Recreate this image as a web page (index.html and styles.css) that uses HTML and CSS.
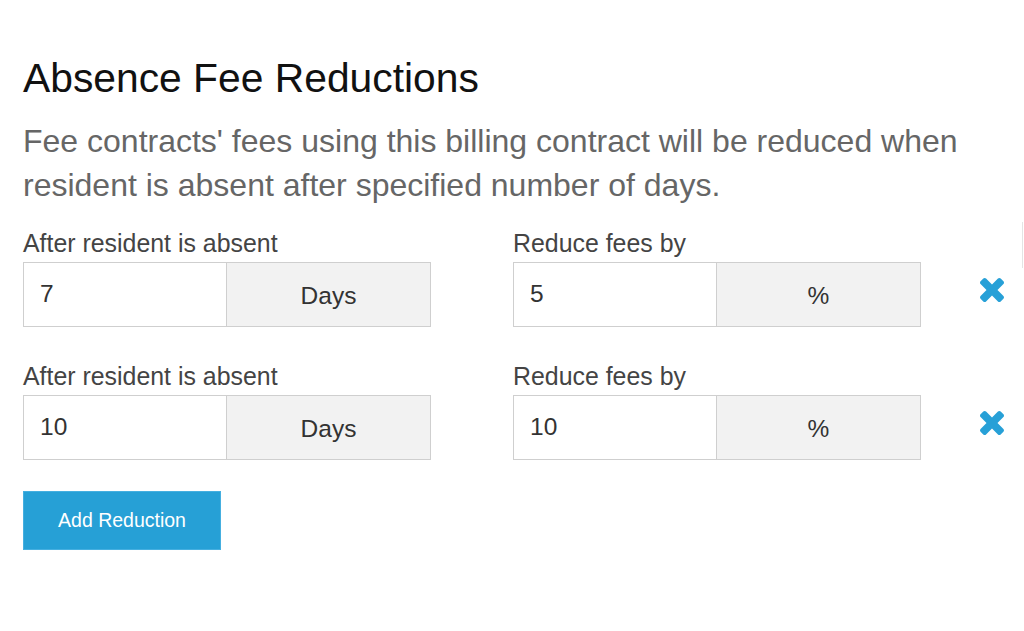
FILE: index.html
```html
<!doctype html>
<html lang="en">
<head>
    <meta charset="UTF-8">
    <meta name="viewport" content="width=device-width, initial-scale=1.0">
    <title>Absence Fee Reductions</title>
    <link rel="stylesheet" href="styles.css">
</head>
<body>
    <div class="edge-line"></div>

    <section class="reductions">
        <h2 class="title">Absence Fee Reductions</h2>
        <p class="intro">Fee contracts' fees using this billing contract will be reduced when resident is absent after specified number of days.</p>

        <!-- Reduction rows -->
        <div class="reduction-row">
            <div class="fields">
                <div class="field">
                    <label>After resident is absent</label>
                    <div class="input-group">
                        <input type="text" value="7">
                        <span class="addon">Days</span>
                    </div>
                </div>
                <div class="field">
                    <label>Reduce fees by</label>
                    <div class="input-group">
                        <input type="text" value="5">
                        <span class="addon">%</span>
                    </div>
                </div>
            </div>
            <button class="remove-btn" title="Remove">
                <svg viewBox="110 366 1188 1188"><path d="M1298 1322q0 40-28 68l-136 136q-28 28-68 28t-68-28l-294-294-294 294q-28 28-68 28t-68-28l-136-136q-28-28-28-68t28-68l294-294-294-294q-28-28-28-68t28-68l136-136q28-28 68-28t68 28l294 294 294-294q28-28 68-28t68 28l136 136q28 28 28 68t-28 68l-294 294 294 294q28 28 28 68z"/></svg>
            </button>
        </div>

        <div class="reduction-row">
            <div class="fields">
                <div class="field">
                    <label>After resident is absent</label>
                    <div class="input-group">
                        <input type="text" value="10">
                        <span class="addon">Days</span>
                    </div>
                </div>
                <div class="field">
                    <label>Reduce fees by</label>
                    <div class="input-group">
                        <input type="text" value="10">
                        <span class="addon">%</span>
                    </div>
                </div>
            </div>
            <button class="remove-btn" title="Remove">
                <svg viewBox="110 366 1188 1188"><path d="M1298 1322q0 40-28 68l-136 136q-28 28-68 28t-68-28l-294-294-294 294q-28 28-68 28t-68-28l-136-136q-28-28-28-68t28-68l294-294-294-294q-28-28-28-68t28-68l136-136q28-28 68-28t68 28l294 294 294-294q28-28 68-28t68 28l136 136q28 28 28 68t-28 68l-294 294 294 294q28 28 28 68z"/></svg>
            </button>
        </div>

        <button class="add-btn">Add Reduction</button>
    </section>
</body>
</html>
```

FILE: styles.css
```css
body {
    margin: 0;
    padding: 0;
    font-family: "Liberation Sans", Arial, sans-serif;
    color: #333;
    background: #fff;
}

.edge-line {
    position: absolute;
    top: 222px;
    right: 1px;
    width: 1px;
    height: 46px;
    background: #e4e4e4;
}

.reductions {
    padding: 55px 0 0 23px;
}

.title {
    margin: 0;
    font-size: 40.8px;
    font-weight: normal;
    line-height: 1.15;
    color: #111;
}

.intro {
    margin: 17px 0 0;
    width: 960px;
    font-size: 32px;
    line-height: 44px;
    color: #666;
}

/* Reduction rows */
.reduction-row {
    display: flex;
    align-items: flex-end;
    gap: 59px;
    margin-top: 21px;
}

.reduction-row + .reduction-row {
    margin-top: 34px;
}

.fields {
    display: flex;
    gap: 82px;
}

.field {
    display: flex;
    flex-direction: column;
    gap: 4px;
    width: 408px;
}

.field label {
    font-size: 24.9px;
    line-height: 30px;
    color: #444;
}

.input-group {
    display: flex;
    height: 65px;
    border: 1px solid #cfcfcf;
    box-sizing: border-box;
}

.input-group input {
    width: 203px;
    box-sizing: border-box;
    border: none;
    border-right: 1px solid #cfcfcf;
    padding: 0 16px;
    font-family: inherit;
    font-size: 24.5px;
    color: #333;
    outline: none;
}

.addon {
    flex: 1;
    display: flex;
    align-items: center;
    justify-content: center;
    padding-top: 4px;
    background: #f2f2f2;
    font-size: 24.5px;
    color: #333;
}

.remove-btn {
    width: 24px;
    height: 24px;
    margin-bottom: 25px;
    padding: 0;
    border: none;
    background: none;
    cursor: pointer;
}

.remove-btn svg {
    display: block;
    width: 24px;
    height: 24px;
    fill: #27a0d7;
}

.add-btn {
    margin-top: 31px;
    width: 198px;
    height: 59px;
    border: 1px solid #45afe0;
    background: #26a0d6;
    color: #fff;
    font-family: inherit;
    font-size: 19.5px;
    cursor: pointer;
}

.add-btn:hover {
    background: #1f8fc2;
}
```
